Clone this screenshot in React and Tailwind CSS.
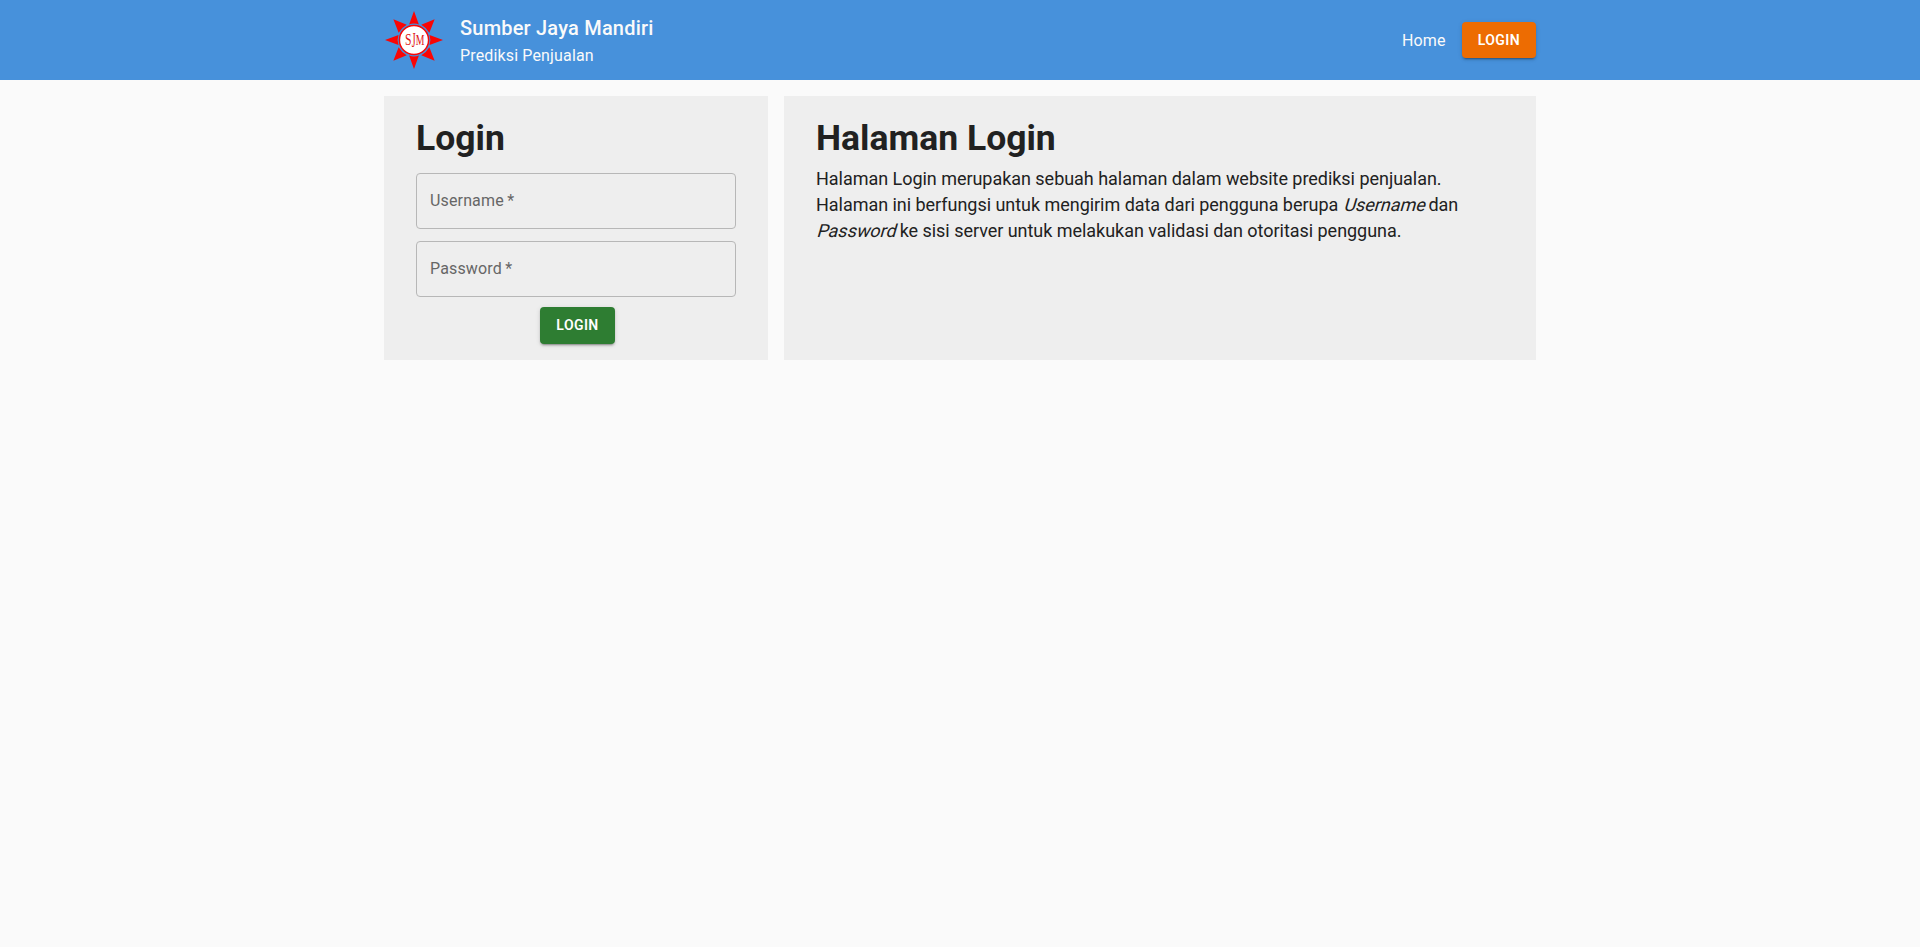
const rays = [0, 90, 180, 270];
const diagonals = [45, 135, 225, 315];

function Logo() {
  return (
    <svg width="60" height="60" viewBox="-30 -30 60 60" className="shrink-0">
      <g fill="#fa0505">
        {rays.map((a) => (
          <path key={a} d="M0-29 4.9-15.5Q0-17.3-4.9-15.5Z" transform={`rotate(${a})`} />
        ))}
        {diagonals.map((a) => (
          <path key={a} d="M0-29.2 5.7-16Q0-17.6-5.7-16Z" transform={`rotate(${a})`} />
        ))}
      </g>
      <circle r="14.6" fill="#fff" stroke="#fa0505" strokeWidth="1.5" />
      <g fill="#e01515" className="font-['Liberation_Serif',serif]">
        <text x="-9" y="5.2" fontSize="16" textLength="6.5" lengthAdjust="spacingAndGlyphs">S</text>
        <text x="-2.3" y="7" fontSize="21" textLength="3.9" lengthAdjust="spacingAndGlyphs">J</text>
        <text x="1.7" y="5.2" fontSize="14" textLength="8.7" lengthAdjust="spacingAndGlyphs">M</text>
      </g>
    </svg>
  );
}

function Button({ className, children }) {
  return (
    <button
      className={`rounded px-4 py-1.5 text-sm leading-[24.5px] font-semibold tracking-[0.4px] text-white uppercase shadow-[0px_3px_1px_-2px_rgba(0,0,0,0.2),0px_2px_2px_0px_rgba(0,0,0,0.14),0px_1px_5px_0px_rgba(0,0,0,0.12)] ${className}`}
    >
      {children}
    </button>
  );
}

function Field({ label, type }) {
  return (
    <input
      type={type}
      aria-label={label}
      placeholder={`${label}\u2009*`}
      className="block h-14 w-full rounded border border-[#b7b7b7] bg-transparent px-[13px] pb-0.5 text-base tracking-[0.15px] placeholder:text-[#666666]"
    />
  );
}

function Slanted({ children }) {
  return <em className="inline-block origin-[0_75%] -skew-x-[16deg] not-italic">{children}</em>;
}

export default function App() {
  return (
    <div className="min-h-screen bg-[#fafafa] font-[Roboto,sans-serif] text-[#212121]">
      <header className="h-20 bg-[#4791db]">
        <div className="mx-auto flex h-full w-[1152px] items-center justify-between text-[#fafafa]">
          <div className="flex items-center gap-4">
            <Logo />
            <div>
              <h1 className="text-xl leading-8 font-medium tracking-[0.2px]">Sumber Jaya Mandiri</h1>
              <p className="text-base leading-6 tracking-[0.15px]">Prediksi Penjualan</p>
            </div>
          </div>
          <nav className="flex items-center gap-4">
            <a className="pt-0.5 text-base tracking-[0.2px]">Home</a>
            <Button className="bg-[#ed6c02]">Login</Button>
          </nav>
        </div>
      </header>
      <main className="mx-auto mt-4 flex w-[1152px] gap-4">
        <section className="w-96 bg-[#eeeeee] px-8 py-4">
          <h2 className="pt-px text-[35.5px] leading-[50px] font-bold">Login</h2>
          <form className="mt-2.5 flex flex-col gap-3">
            <Field label="Username" type="text" />
            <Field label="Password" type="password" />
            <div className="-mt-0.5 flex justify-center pl-[3px]">
              <Button className="bg-[#2e7d32]">Login</Button>
            </div>
          </form>
        </section>
        <section className="flex-1 bg-[#eeeeee] px-8 py-4">
          <h2 className="pt-px text-[35.5px] leading-[50px] font-bold">Halaman Login</h2>
          <p className="mt-[3px] text-lg leading-[26px] tracking-[-0.035px]">
            Halaman Login merupakan sebuah halaman dalam website prediksi penjualan. Halaman ini berfungsi untuk
            mengirim data dari pengguna berupa <Slanted>Username</Slanted> dan <Slanted>Password</Slanted> ke sisi
            server untuk melakukan validasi dan otoritasi pengguna.
          </p>
        </section>
      </main>
    </div>
  );
}
